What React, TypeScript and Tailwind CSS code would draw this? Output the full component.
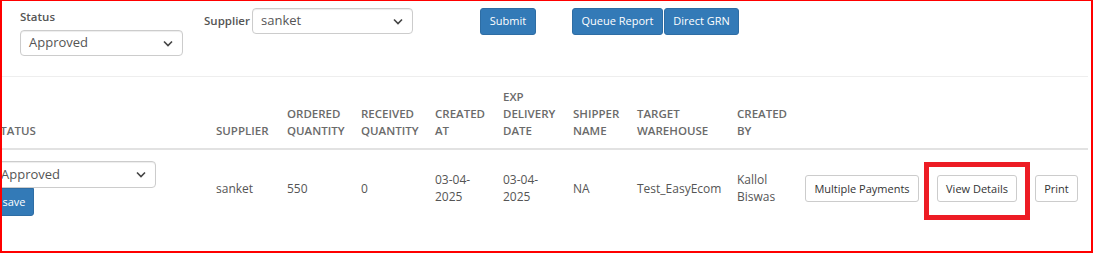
const font = { fontFamily: '"Open Sans", "Liberation Sans", sans-serif' };

const Chevron = () => (
  <svg width="10" height="7" viewBox="0 0 10 7" className="shrink-0">
    <path d="M1 1.5l4 4 4-4" fill="none" stroke="#444" strokeWidth="1.6" />
  </svg>
);

const Select = ({ value, className }: { value: string; className: string }) => (
  <div
    className={`flex items-center justify-between rounded-[4px] border border-[#ccc] bg-white pl-[8px] pr-[9px] text-[13px] text-[#555] shadow-[inset_0_1px_1px_rgba(0,0,0,0.075)] ${className}`}
  >
    <span>{value}</span>
    <Chevron />
  </div>
);

const PrimaryButton = ({ label, className }: { label: string; className: string }) => (
  <button className={`flex items-center justify-center rounded-[3px] border border-[#2e6da4] bg-[#337ab7] text-[11px] text-white ${className}`}>
    {label}
  </button>
);

const DefaultButton = ({ label, className }: { label: string; className: string }) => (
  <button className={`flex h-[27px] items-center justify-center rounded-[3px] border border-[#ccc] bg-white text-[11px] text-[#333] ${className}`}>
    {label}
  </button>
);

const columns = [
  { w: "w-[222px]", head: ["STATUS"] },
  { w: "w-[71px]", head: ["SUPPLIER"] },
  { w: "w-[74px]", head: ["ORDERED", "QUANTITY"] },
  { w: "w-[74px]", head: ["RECEIVED", "QUANTITY"] },
  { w: "w-[68px]", head: ["CREATED", "AT"] },
  { w: "w-[70px]", head: ["EXP", "DELIVERY", "DATE"] },
  { w: "w-[64px]", head: ["SHIPPER", "NAME"] },
  { w: "w-[100px]", head: ["TARGET", "WAREHOUSE"] },
  { w: "w-[68px]", head: ["CREATED", "BY"] },
  { w: "w-[291px]", head: [] as string[] },
];

const rowValues: string[][] = [
  ["sanket"],
  ["550"],
  ["0"],
  ["03-04-", "2025"],
  ["03-04-", "2025"],
  ["NA"],
  ["Test_EasyEcom"],
  ["Kallol", "Biswas"],
];

export default function App() {
  return (
    <div
      style={font}
      className="h-[253px] w-[1093px] overflow-hidden border-t border-r-2 border-b-2 border-l-2 border-[#ff0000] bg-white"
    >
      {/* filters */}
      <div className="flex h-[75px] items-start pt-[7px]">
        <div className="ml-[18px] flex flex-col">
          <label className="text-[11.5px] font-semibold leading-[18px] text-[#555]">Status</label>
          <Select value="Approved" className="mt-[4px] h-[26px] w-[163px]" />
        </div>
        <div className="ml-[21px] flex h-[26px] items-center">
          <label className="w-[48px] text-[11.5px] font-semibold text-[#555]">Supplier</label>
          <Select value="sanket" className="h-[26px] w-[161px]" />
        </div>
        <PrimaryButton label="Submit" className="ml-[67px] h-[27px] w-[56px]" />
        <PrimaryButton label="Queue Report" className="ml-[36px] h-[27px] w-[91px]" />
        <PrimaryButton label="Direct GRN" className="ml-[1px] h-[27px] w-[75px]" />
      </div>

      {/* table */}
      <div className="-ml-[16px] w-[1102px] border-t border-[#eee]">
        <div className="flex h-[73px] items-end border-b-2 border-[#e2e2e2]">
          {columns.map((col, i) => (
            <div
              key={i}
              className={`${col.w} shrink-0 px-2 pb-[9px] text-[11.5px] font-semibold leading-[17px] whitespace-nowrap text-[#6a6a6a]`}
            >
              {col.head.map((line, j) => (
                <div key={j}>{line}</div>
              ))}
            </div>
          ))}
        </div>
        <div className="flex h-[76px] items-center text-[12px] leading-[17px] text-[#555]">
          <div className="w-[222px] shrink-0 px-2">
            <Select value="Approved" className="-ml-[2px] h-[27px] w-[164px]" />
            <PrimaryButton label="save" className="h-[28px] w-[40px] rounded-t-none" />
          </div>
          {rowValues.map((lines, i) => (
            <div key={i} className={`${columns[i + 1].w} shrink-0 px-2 whitespace-nowrap`}>
              {lines.map((line, j) => (
                <div key={j}>{line}</div>
              ))}
            </div>
          ))}
          <div className="flex w-[291px] shrink-0 items-center px-2">
            <DefaultButton label="Multiple Payments" className="w-[114px]" />
            <div className="relative ml-[18px]">
              <DefaultButton label="View Details" className="w-[80px]" />
              <div className="absolute -top-[13px] -left-[13px] h-[58px] w-[106px] border-[5px] border-[#ed1c24]" />
            </div>
            <DefaultButton label="Print" className="ml-[18px] w-[43px]" />
          </div>
        </div>
      </div>
    </div>
  );
}
